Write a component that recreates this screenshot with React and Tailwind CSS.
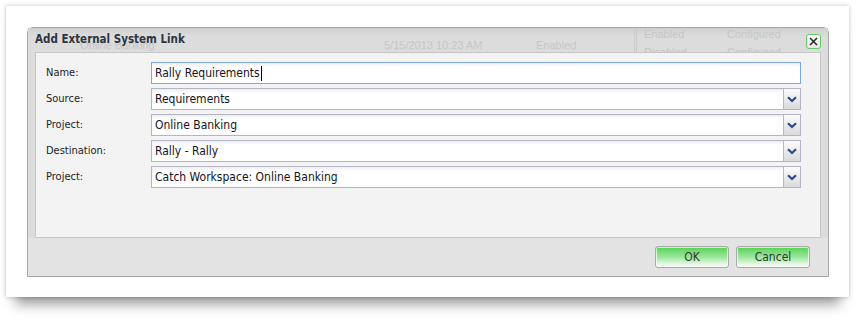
import React from 'react';

const labelFont = { fontFamily: '"DejaVu Sans Condensed", "DejaVu Sans", sans-serif' };

const Chevron = () => (
    <svg width="10" height="7" viewBox="0 0 10 7">
        <path d="M1 1.2 L5 5 L9 1.2" fill="none" stroke="#2b4a8a" strokeWidth="2.2" strokeLinejoin="miter" />
    </svg>
);

const Field = ({ label, value, focused, select }) => (
    <div className="flex items-center h-[22px]">
        <div className="w-[115px] pl-[10px] text-[11px] text-[#1c1c2a]" style={labelFont}>{label}</div>
        <div
            className={`flex-1 h-[22px] flex items-stretch bg-white border ${
                focused ? 'border-[#7fa9da]' : 'border-[#b3b3c9]'
            } shadow-[inset_0_3px_3px_-1px_rgba(0,0,0,0.07)]`}
        >
            <div className="flex-1 flex items-center pl-[3px] text-[12px] text-[#141420]" style={labelFont}>
                {value}
                {focused && <span className="w-px h-[15px] bg-black ml-px" />}
            </div>
            {select && (
                <div className="w-[17px] flex items-center justify-center border-l border-[#b8b8c8] bg-gradient-to-b from-[#fbfbfb] to-[#dadada]">
                    <Chevron />
                </div>
            )}
        </div>
    </div>
);

const Button = ({ children }) => (
    <button
        className="w-[74px] h-[22px] rounded-[3px] border border-[#a8a8a8] bg-gradient-to-b from-[#4fd24f] via-[#9be69b] to-white text-[12px] text-[#333] flex items-center justify-center shadow-[inset_0_0_0_1px_rgba(255,255,255,0.7)]"
        style={labelFont}
    >
        {children}
    </button>
);

export default function App() {
    return (
        <div className="w-[863px] h-[327px] bg-white overflow-hidden pt-[6px] pl-[6px]">
            <div className="w-[843px] h-[291px] bg-white pt-[21px] pl-[21px] shadow-[0_0_4px_rgba(0,0,0,0.25),0_16px_12px_-9px_rgba(0,0,0,0.4)]">
                {/* dialog frame */}
                <div className="relative w-[802px] h-[250px] rounded-t-[6px] border border-[#a6a6a6] bg-[#dcdcdc] flex flex-col">
                    {/* page content showing through the title bar */}
                    <div className="absolute inset-0 overflow-hidden text-[11px] text-[#c6c6c6]" style={{ fontFamily: '"Liberation Sans", sans-serif' }}>
                        <div className="absolute left-0 right-0 top-0 h-[8px] bg-gradient-to-b from-[#cfcfcf] to-[#dcdcdc]" />
                        <span className="absolute left-[52px] top-[9px]">Online Banking</span>
                        <span className="absolute left-[356px] top-[9px]">5/15/2013 10:23 AM</span>
                        <span className="absolute left-[508px] top-[9px]">Enabled</span>
                        <div className="absolute left-[606px] top-0 h-[25px] w-[3px] border-x border-[#cbcbcb]" />
                        <span className="absolute left-[616px] top-0 leading-[12px]">Enabled</span>
                        <span className="absolute left-[699px] top-0 leading-[12px]">Configured</span>
                        <span className="absolute left-[616px] top-[16px]">Disabled</span>
                        <span className="absolute left-[699px] top-[16px]">Configured</span>
                    </div>

                    {/* title bar */}
                    <div className="relative h-[24px] flex items-center justify-between pl-[7px] pr-[7px]">
                        <span className="text-[11.5px] font-bold text-[#2e3440]" style={labelFont}>Add External System Link</span>
                        <div className="w-[15px] h-[15px] mt-[2px] rounded-[3px] border border-[#62cc62] bg-gradient-to-b from-white to-[#e6e6e6] flex items-center justify-center">
                            <svg width="9" height="9" viewBox="0 0 9 9">
                                <path d="M1 1 L8 8 M8 1 L1 8" stroke="#2a2a2a" strokeWidth="1.6" />
                            </svg>
                        </div>
                    </div>

                    {/* body */}
                    <div className="relative mx-[7px] h-[186px] bg-[#f3f3f3] border border-[#c6c6c6] pt-[9px] pr-[19px] flex flex-col gap-[4px]">
                        <Field label="Name:" value="Rally Requirements" focused />
                        <Field label="Source:" value="Requirements" select />
                        <Field label="Project:" value="Online Banking" select />
                        <Field label="Destination:" value="Rally - Rally" select />
                        <Field label="Project:" value="Catch Workspace: Online Banking" select />
                    </div>

                    {/* footer */}
                    <div className="relative flex-1 bg-[#e3e3e3] flex justify-end items-start pt-[8px] pr-[18px] gap-[7px]">
                        <Button>OK</Button>
                        <Button>Cancel</Button>
                    </div>
                </div>
            </div>
        </div>
    );
}
